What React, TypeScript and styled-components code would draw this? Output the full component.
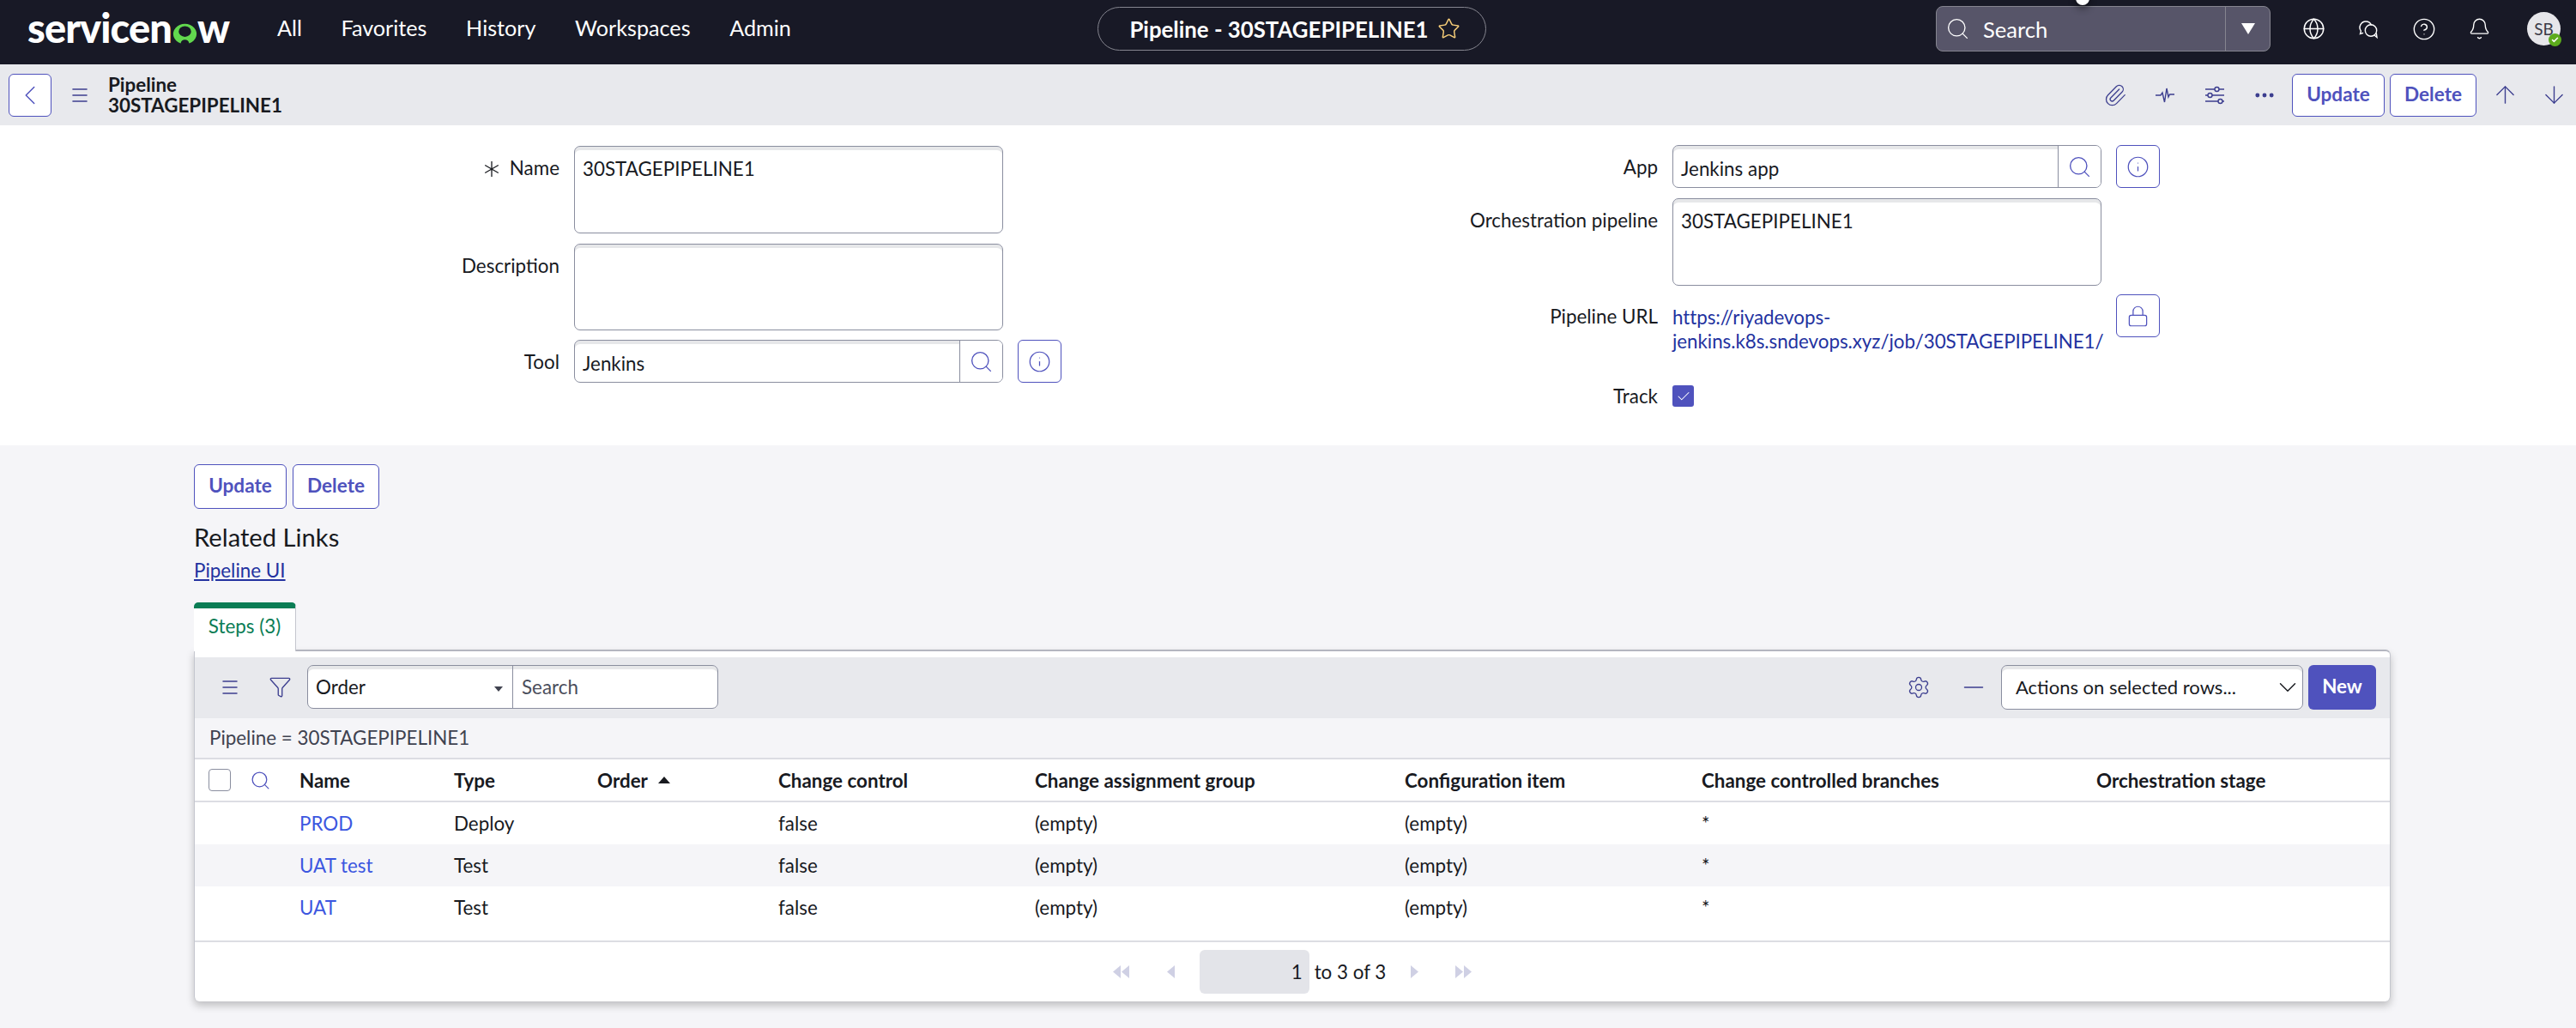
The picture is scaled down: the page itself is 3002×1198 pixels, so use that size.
import React from "react";
import styled, { createGlobalStyle } from "styled-components";
import {
  ArrowDown,
  ArrowUp,
  Bell,
  Check,
  ChevronDown,
  ChevronLeft,
  CircleHelp,
  Ellipsis,
  Funnel,
  Globe,
  Info,
  Lock,
  Menu,
  Minus,
  Paperclip,
  Search,
  Settings,
  Star,
} from "lucide-react";

const navItems = ["All", "Favorites", "History", "Workspaces", "Admin"];

const steps = [
  { name: "PROD", type: "Deploy" },
  { name: "UAT test", type: "Test" },
  { name: "UAT", type: "Test" },
];

export default function App() {
  return (
    <>
      <GlobalStyle />
      <TopBar>
        <TopLeft>
          <Logo>
            servicen
            <LogoRing viewBox="0 0 32 32" preserveAspectRatio="none">
              <path
                d="M10.5 30A15 15 0 1 1 21.5 30C20.8 26.4 18.8 24.6 16 24.6S11.2 26.4 10.5 30Z M16 20.4A8 8 0 1 0 16 4.4A8 8 0 0 0 16 20.4Z"
                fillRule="evenodd"
              />
            </LogoRing>
            w
          </Logo>
          <Nav>
            {navItems.map((item) => (
              <NavLink key={item}>{item}</NavLink>
            ))}
          </Nav>
        </TopLeft>
        <TitlePill>
          Pipeline - 30STAGEPIPELINE1
          <Star size={27} strokeWidth={1.3} color="#f6cd78" />
        </TitlePill>
        <TopRight>
          <GlobalSearch>
            <PointerBlob />
            <GlobalSearchField>
              <Search size={29} strokeWidth={1.1} color="#fff" />
              Search
            </GlobalSearchField>
            <GlobalSearchCaret />
          </GlobalSearch>
          <TopIcons>
            <Globe size={27} strokeWidth={1.3} />
            <ChatIcon />
            <CircleHelp size={28} strokeWidth={1.2} />
            <Bell size={27} strokeWidth={1.2} />
          </TopIcons>
          <Avatar>
            SB
            <AvatarStatus>
              <Check size={9} strokeWidth={4} color="#fff" />
            </AvatarStatus>
          </Avatar>
        </TopRight>
      </TopBar>

      <SubBar>
        <BackButton>
          <ChevronLeft size={38} strokeWidth={0.9} />
        </BackButton>
        <SubMenu>
          <Menu size={24} strokeWidth={1.6} />
        </SubMenu>
        <SubTitle>
          <div>Pipeline</div>
          <div>30STAGEPIPELINE1</div>
        </SubTitle>
        <SubActions>
          <SubIcons>
            <SubIconSlot>
              <Paperclip size={28} strokeWidth={1.1} />
            </SubIconSlot>
            <SubIconSlot>
              <PulseIcon />
            </SubIconSlot>
            <SubIconSlot>
              <SlidersIcon />
            </SubIconSlot>
            <SubIconSlot>
              <Ellipsis size={28} strokeWidth={2.2} />
            </SubIconSlot>
          </SubIcons>
          <OutlineButton $width={108}>Update</OutlineButton>
          <OutlineButton $width={101}>Delete</OutlineButton>
          <ArrowGroup>
            <ArrowUp size={33} strokeWidth={1} />
            <ArrowDown size={33} strokeWidth={1} />
          </ArrowGroup>
        </SubActions>
      </SubBar>

      <FormArea>
        <FormColumn $top={24}>
          <FormRow>
            <FieldLabel $labelWidth={652}>
              <RequiredMark />
              Name
            </FieldLabel>
            <TextArea readOnly value="30STAGEPIPELINE1" $height={102} />
          </FormRow>
          <FormRow>
            <FieldLabel $labelWidth={652}>Description</FieldLabel>
            <TextArea readOnly value="" $height={101} />
          </FormRow>
          <ToolRow>
            <FieldLabel $labelWidth={652}>Tool</FieldLabel>
            <LookupField value="Jenkins" />
            <SideButton>
              <Info size={27} strokeWidth={1.1} />
            </SideButton>
          </ToolRow>
        </FormColumn>
        <FormColumn $top={23}>
          <FormRow>
            <FieldLabel $labelWidth={632}>App</FieldLabel>
            <LookupField value="Jenkins app" />
            <SideButton>
              <Info size={27} strokeWidth={1.1} />
            </SideButton>
          </FormRow>
          <FormRow>
            <FieldLabel $labelWidth={632}>Orchestration pipeline</FieldLabel>
            <TextArea readOnly value="30STAGEPIPELINE1" $height={102} />
          </FormRow>
          <UrlRow>
            <FieldLabel $labelWidth={632}>Pipeline URL</FieldLabel>
            <UrlLink>https://riyadevops-jenkins.k8s.sndevops.xyz/job/30STAGEPIPELINE1/</UrlLink>
            <SideButton>
              <Lock size={27} strokeWidth={1.1} />
            </SideButton>
          </UrlRow>
          <TrackRow>
            <FieldLabel $labelWidth={632}>Track</FieldLabel>
            <CheckedBox>
              <Check size={18} strokeWidth={1.4} color="#fff" />
            </CheckedBox>
          </TrackRow>
        </FormColumn>
      </FormArea>

      <LowerArea>
        <ButtonRow>
          <OutlineButton $width={108} $height={52}>
            Update
          </OutlineButton>
          <OutlineButton $width={101} $height={52}>
            Delete
          </OutlineButton>
        </ButtonRow>
        <RelatedTitle>Related Links</RelatedTitle>
        <RelatedLink>Pipeline UI</RelatedLink>
        <Tab>Steps (3)</Tab>
        <ListCard>
          <ListToolbar>
            <ToolbarIcon $width={30} $left={26}>
              <Menu size={24} strokeWidth={1.5} />
            </ToolbarIcon>
            <ToolbarIcon $width={30} $left={28}>
              <Funnel size={27} strokeWidth={1.2} />
            </ToolbarIcon>
            <SearchCombo>
              <ComboSelect>
                Order
                <SmallCaret />
              </ComboSelect>
              <ComboInput>Search</ComboInput>
            </SearchCombo>
            <ToolbarRight>
              <ToolbarIcon $width={30}>
                <Settings size={28} strokeWidth={1.1} />
              </ToolbarIcon>
              <ToolbarIcon $width={36} $left={31}>
                <Minus size={36} strokeWidth={1} />
              </ToolbarIcon>
              <ActionSelect>
                Actions on selected rows...
                <ChevronDown size={34} strokeWidth={1} />
              </ActionSelect>
              <NewButton>New</NewButton>
            </ToolbarRight>
          </ListToolbar>
          <FilterLine>Pipeline = 30STAGEPIPELINE1</FilterLine>
          <HeaderRow>
            <SelectCell>
              <RowCheckbox />
              <Search size={25} strokeWidth={1.2} color="#4f52bd" />
            </SelectCell>
            <span>Name</span>
            <span>Type</span>
            <OrderHeader>
              Order
              <UpCaret />
            </OrderHeader>
            <span>Change control</span>
            <span>Change assignment group</span>
            <span>Configuration item</span>
            <span>Change controlled branches</span>
            <span>Orchestration stage</span>
          </HeaderRow>
          <RowGroup>
            {steps.map((step, index) => (
              <DataRow key={step.name} $striped={index === 1}>
                <span />
                <RowLink>{step.name}</RowLink>
                <span>{step.type}</span>
                <span />
                <span>false</span>
                <span>(empty)</span>
                <span>(empty)</span>
                <span>*</span>
                <span />
              </DataRow>
            ))}
          </RowGroup>
          <Pager>
            <PagerIcon>
              <PagerArrow $double $flip />
            </PagerIcon>
            <PagerIcon $left={34}>
              <PagerArrow $flip />
            </PagerIcon>
            <PageInput>1</PageInput>
            <PageText>to 3 of 3</PageText>
            <PagerIcon $left={21}>
              <PagerArrow />
            </PagerIcon>
            <PagerIcon $left={33}>
              <PagerArrow $double />
            </PagerIcon>
          </Pager>
        </ListCard>
      </LowerArea>
    </>
  );
}

function LookupField({ value }: { value: string }) {
  return (
    <Lookup>
      <LookupValue>{value}</LookupValue>
      <LookupButton>
        <Search size={29} strokeWidth={1.1} />
      </LookupButton>
    </Lookup>
  );
}

function RequiredMark() {
  return (
    <RequiredIcon viewBox="0 0 20 20" fill="none" stroke="currentColor" strokeWidth="1.3">
      <path d="M10 1v18M2.2 5.5l15.6 9M17.8 5.5l-15.6 9" />
    </RequiredIcon>
  );
}

function ChatIcon() {
  return (
    <svg width="27" height="24" viewBox="0 0 26 24" fill="none" stroke="currentColor" strokeWidth="1.4">
      <path d="M9.5 3a7 7 0 0 0-5.6 11.1L3 17.5l3.6-1.2" />
      <path d="M9.5 3a7 7 0 0 1 6.6 4.4" />
      <circle cx="15.5" cy="13.5" r="6.7" />
      <path d="M19.5 19l3 2.5-.7-5" />
    </svg>
  );
}

function PulseIcon() {
  return (
    <svg width="24" height="24" viewBox="0 0 24 24" fill="none" stroke="currentColor" strokeWidth="1.4">
      <path d="M1 12h6l2-3 2.5 11L14 4l2 10 1.5-3H23" />
    </svg>
  );
}

function SlidersIcon() {
  return (
    <svg width="24" height="24" viewBox="0 0 24 24" fill="none" stroke="currentColor" strokeWidth="1.4">
      <path d="M1 5h11M17 5h6M1 12h3M9 12h14M1 19h15M21 19h2" />
      <circle cx="14.5" cy="5" r="2.5" />
      <circle cx="6.5" cy="12" r="2.5" />
      <circle cx="18.5" cy="19" r="2.5" />
    </svg>
  );
}

function PagerArrow({ $flip, $double }: { $flip?: boolean; $double?: boolean }) {
  const single = $flip ? "9,0 9,15 0,7.5" : "0,0 0,15 9,7.5";
  const pair = $flip ? [single, "19,0 19,15 10,7.5"] : [single, "10,0 10,15 19,7.5"];
  const shapes = $double ? pair : [single];
  const width = $double ? 19 : 9;
  return (
    <svg width={width} height="15" viewBox={`0 0 ${width} 15`} fill="#cfd0e4">
      {shapes.map((p) => (
        <polygon key={p} points={p} />
      ))}
    </svg>
  );
}

const GlobalStyle = createGlobalStyle`
  html, body {
    margin: 0;
    background: #f5f5f8;
  }
  body {
    font-family: Lato, "Liberation Sans", sans-serif;
    font-size: 22.4px;
    color: #181a1f;
  }
  * {
    box-sizing: border-box;
  }
  button {
    font-family: inherit;
  }
`;

const TopBar = styled.header`
  height: 75px;
  background: #181926;
  display: grid;
  grid-template-columns: 1279px 453px 1fr;
  align-items: start;
  color: #fff;
`;

const TopLeft = styled.div`
  display: flex;
  align-items: center;
  padding: 7px 0 0 32px;
  gap: 53px;
`;

const Logo = styled.div`
  width: 238px;
  display: flex;
  align-items: baseline;
  font-size: 47px;
  font-weight: 900;
  line-height: 50px;
  letter-spacing: -0.9px;
`;

const LogoRing = styled.svg`
  width: 29px;
  height: 25px;
  fill: #62d84e;
  align-self: flex-end;
  margin: 0 0 5px 1px;
`;

const Nav = styled.nav`
  display: flex;
  gap: 45.6px;
`;

const NavLink = styled.span`
  font-size: 25.2px;
`;

const TitlePill = styled.div`
  height: 51px;
  margin-top: 8px;
  border: 1.5px solid #85858f;
  border-radius: 26px;
  display: flex;
  align-items: center;
  justify-content: center;
  gap: 10px;
  font-size: 25.8px;
  font-weight: 700;
  padding-left: 7px;
`;

const TopRight = styled.div`
  display: flex;
  align-items: center;
  padding: 7px 0 0 524px;
`;

const GlobalSearch = styled.div`
  position: relative;
  width: 390px;
  height: 53px;
  display: flex;
  background: #575569;
  border: 1.5px solid #85858f;
  border-radius: 8px;
  font-size: 25.6px;
`;

const PointerBlob = styled.span`
  position: absolute;
  left: 162px;
  top: -14px;
  width: 16px;
  height: 12px;
  border-radius: 0 0 8px 8px;
  background: #fff;
  box-shadow: 0 4px 8px rgba(0, 0, 0, 0.45);
`;

const GlobalSearchField = styled.div`
  flex: 1;
  display: flex;
  align-items: center;
  gap: 15px;
  padding-left: 10px;
`;

const GlobalSearchCaret = styled.div`
  width: 52px;
  border-left: 1.5px solid #85858f;
  position: relative;

  &::after {
    content: "";
    position: absolute;
    left: 18px;
    top: 19px;
    border-left: 8px solid transparent;
    border-right: 8px solid transparent;
    border-top: 13px solid #fff;
  }
`;

const TopIcons = styled.div`
  display: flex;
  align-items: center;
  gap: 37px;
  margin-left: 37px;
`;

const Avatar = styled.div`
  position: relative;
  width: 39px;
  height: 39px;
  margin-left: 42px;
  border-radius: 50%;
  background: #e6e6ea;
  color: #3a3a48;
  display: flex;
  align-items: center;
  justify-content: center;
  font-size: 19px;
`;

const AvatarStatus = styled.span`
  position: absolute;
  right: -1px;
  bottom: -1px;
  width: 15px;
  height: 15px;
  border-radius: 50%;
  background: #5cab1c;
  display: flex;
  align-items: center;
  justify-content: center;
`;

const SubBar = styled.div`
  height: 71px;
  background: #e8e9ed;
  display: flex;
  align-items: center;
  padding: 0 9px 0 10px;
  color: #3c3e8f;
`;

const BackButton = styled.button`
  width: 50px;
  height: 50px;
  padding: 0;
  background: #fff;
  border: 1.6px solid #4f52bd;
  border-radius: 6px;
  color: #4f52bd;
  display: flex;
  align-items: center;
  justify-content: center;
`;

const SubMenu = styled.span`
  display: flex;
  margin-left: 21px;
`;

const SubTitle = styled.div`
  margin-left: 21px;
  font-weight: 700;
  line-height: 24px;
  color: #181a1f;
`;

const SubActions = styled.div`
  margin-left: auto;
  display: flex;
  align-items: center;
  gap: 6px;
`;

const SubIcons = styled.div`
  display: flex;
  align-items: center;
  gap: 28px;
  margin-right: 11px;
`;

const SubIconSlot = styled.span`
  width: 30px;
  display: flex;
  justify-content: center;
`;

const OutlineButton = styled.button<{ $width: number; $height?: number }>`
  width: ${(p) => p.$width}px;
  height: ${(p) => p.$height ?? 50}px;
  padding: 0 0 3px;
  background: #fff;
  border: 1.6px solid #4f52bd;
  border-radius: 6px;
  color: #4f52bd;
  font-size: 22.6px;
  font-weight: 700;
`;

const ArrowGroup = styled.div`
  display: flex;
  gap: 24px;
  margin-left: 11px;
`;

const FormArea = styled.section`
  height: 373px;
  background: #fff;
  display: grid;
  grid-template-columns: 1300px 1fr;
`;

const FormColumn = styled.div<{ $top: number }>`
  display: flex;
  flex-direction: column;
  gap: 12px;
  padding-top: ${(p) => p.$top}px;
`;

const FormRow = styled.div`
  display: flex;
  align-items: flex-start;
  gap: 17px;
`;

const ToolRow = styled(FormRow)`
  margin-top: -1px;
`;

const UrlRow = styled(FormRow)`
  margin-top: -2px;
  height: 94px;
`;

const TrackRow = styled(FormRow)`
  align-items: center;
  height: 25px;
`;

const FieldLabel = styled.label<{ $labelWidth: number }>`
  width: ${(p) => p.$labelWidth}px;
  flex: none;
  text-align: right;
  line-height: 28px;
  padding-top: 12px;

  ${TrackRow} & {
    padding-top: 0;
  }
`;

const RequiredIcon = styled.svg`
  width: 20px;
  height: 20px;
  margin-right: 11px;
  vertical-align: -3px;
`;

const inputLook = `
  border: 1.6px solid #8a8e9f;
  border-radius: 7px;
  box-shadow: inset 0 4px 0 #e6e7e9;
  background: #fff;
  color: #181a1f;
`;

const TextArea = styled.textarea<{ $height: number }>`
  ${inputLook}
  display: block;
  width: 500px;
  height: ${(p) => p.$height}px;
  padding: 12px 9px 0;
  font-family: inherit;
  font-size: 22.4px;
  line-height: 28px;
  resize: none;
  outline: none;
`;

const Lookup = styled.div`
  ${inputLook}
  width: 500px;
  height: 50px;
  display: flex;
  align-items: center;
`;

const LookupValue = styled.span`
  flex: 1;
  padding: 4px 0 0 9px;
`;

const LookupButton = styled.span`
  width: 50px;
  height: 100%;
  border-left: 1.6px solid #8a8e9f;
  background: #fff;
  border-radius: 0 6px 6px 0;
  color: #4f52bd;
  display: flex;
  align-items: center;
  justify-content: center;
`;

const SideButton = styled.button`
  width: 51px;
  height: 50px;
  padding: 0;
  background: #fff;
  border: 1.6px solid #4f52bd;
  border-radius: 6px;
  color: #4f52bd;
  display: flex;
  align-items: center;
  justify-content: center;
`;

const UrlLink = styled.a`
  width: 500px;
  flex: none;
  color: #2332a0;
  line-height: 28px;
  padding-top: 13px;
  letter-spacing: -0.06px;
`;

const CheckedBox = styled.span`
  width: 25px;
  height: 25px;
  background: #4f52bd;
  border-radius: 3px;
  display: flex;
  align-items: center;
  justify-content: center;
`;

const LowerArea = styled.section`
  padding: 22px 216px 31px 226px;
`;

const ButtonRow = styled.div`
  display: flex;
  gap: 7px;
`;

const RelatedTitle = styled.div`
  margin-top: 12px;
  font-size: 29.2px;
  line-height: 42px;
`;

const RelatedLink = styled.a`
  display: block;
  width: max-content;
  margin-top: 1px;
  line-height: 34px;
  color: #2332a0;
  text-decoration: underline;
`;

const Tab = styled.div`
  position: relative;
  z-index: 1;
  width: 119px;
  height: 57px;
  margin-top: 20px;
  padding-top: 7px;
  border-top: 7px solid #0a7d55;
  border-right: 1.6px solid #c4c6ce;
  border-radius: 5px 5px 0 0;
  background: #fff;
  color: #0a7d55;
  text-align: center;
  line-height: 28px;
`;

const ListCard = styled.div`
  margin-top: -2px;
  padding-top: 7px;
  background: #fff;
  border-top: 2px solid #b4b6c0;
  border-left: 1px solid #c4c6ce;
  border-right: 1px solid #c4c6ce;
  border-radius: 0 6px 6px 6px;
  box-shadow: 0 5px 10px rgba(0, 0, 0, 0.22);
`;

const ListToolbar = styled.div`
  height: 71px;
  background: #e8e9ed;
  display: flex;
  align-items: center;
  padding: 0 16px 2px 0;
  color: #3c3e8f;
`;

const ToolbarIcon = styled.span<{ $width: number; $left?: number }>`
  width: ${(p) => p.$width}px;
  margin-left: ${(p) => p.$left ?? 0}px;
  display: flex;
  justify-content: center;
`;

const SearchCombo = styled.div`
  ${inputLook}
  width: 479px;
  height: 51px;
  margin-left: 17px;
  display: flex;
`;

const ComboSelect = styled.div`
  width: 239px;
  padding: 0 11px 0 9px;
  border-right: 1.6px solid #8a8e9f;
  display: flex;
  align-items: center;
  justify-content: space-between;
`;

const SmallCaret = styled.span`
  margin-top: 4px;
  border-left: 5px solid transparent;
  border-right: 5px solid transparent;
  border-top: 6px solid #40424f;
`;

const ComboInput = styled.div`
  flex: 1;
  padding-left: 10px;
  display: flex;
  align-items: center;
  color: #4b4e5c;
`;

const ToolbarRight = styled.div`
  margin-left: auto;
  display: flex;
  align-items: center;
`;

const ActionSelect = styled.div`
  ${inputLook}
  width: 352px;
  height: 52px;
  margin-left: 14px;
  padding: 0 0 0 16px;
  font-size: 22px;
  display: flex;
  align-items: center;
  justify-content: space-between;
`;

const NewButton = styled.button`
  width: 79px;
  height: 52px;
  margin-left: 6px;
  padding: 0 0 3px;
  background: #4f52bd;
  border: none;
  border-radius: 6px;
  color: #fff;
  font-size: 22.4px;
  font-weight: 700;
`;

const FilterLine = styled.div`
  height: 46px;
  background: #f5f5f8;
  padding: 0 0 2px 17px;
  display: flex;
  align-items: center;
  color: #3f4250;
`;

const columns = "122px 180px 167px 211px 299px 431px 346px 460px 1fr";

const HeaderRow = styled.div`
  height: 52px;
  display: grid;
  grid-template-columns: ${columns};
  align-items: center;
  border-top: 2px solid #dcdde3;
  border-bottom: 2px solid #dcdde3;
  font-weight: 700;
`;

const SelectCell = styled.div`
  display: flex;
  align-items: center;
  gap: 22px;
  padding-left: 16px;
`;

const RowCheckbox = styled.span`
  width: 26px;
  height: 26px;
  border: 1.6px solid #8a8e9f;
  border-radius: 4px;
  background: #fff;
`;

const OrderHeader = styled.span`
  display: flex;
  align-items: center;
  gap: 12px;
`;

const UpCaret = styled.span`
  border-left: 7px solid transparent;
  border-right: 7px solid transparent;
  border-bottom: 8px solid #181a1f;
`;

const RowGroup = styled.div`
  padding-bottom: 14px;
`;

const DataRow = styled.div<{ $striped: boolean }>`
  height: 49px;
  display: grid;
  grid-template-columns: ${columns};
  align-items: center;
  background: ${(p) => (p.$striped ? "#f5f5f8" : "#fff")};
`;

const RowLink = styled.a`
  color: #3c57e0;
`;

const Pager = styled.div`
  height: 71px;
  border-top: 2px solid #dcdde3;
  display: flex;
  align-items: center;
  justify-content: center;
`;

const PagerIcon = styled.span<{ $left?: number }>`
  width: 24px;
  margin-left: ${(p) => p.$left ?? 0}px;
  display: flex;
  justify-content: center;
`;

const PageInput = styled.div`
  width: 128px;
  height: 51px;
  margin-left: 21px;
  padding-right: 8px;
  background: #e3e4e9;
  border-radius: 6px;
  display: flex;
  align-items: center;
  justify-content: flex-end;
`;

const PageText = styled.span`
  margin-left: 6px;
`;
